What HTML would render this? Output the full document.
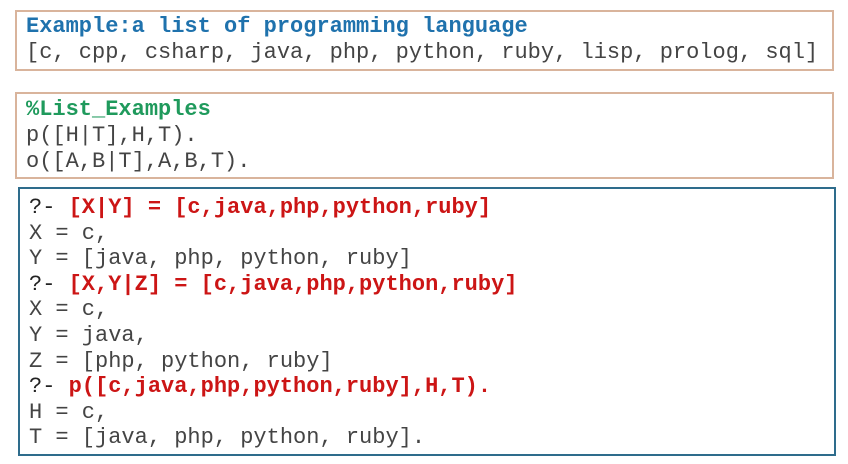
<!DOCTYPE html>
<html><head><style>
body{margin:0;width:848px;height:464px;background:#fff;position:relative;overflow:hidden;font-family:"Liberation Mono",monospace;font-size:22px;color:#444}
.box{position:absolute;box-sizing:border-box;white-space:pre}
.b1{left:15px;top:10px;width:819px;height:61px;border:2px solid #d9b49c;padding:2px 0 0 9px;line-height:26px}
.b2{left:15px;top:92px;width:819px;height:87px;border:2px solid #d9b49c;padding:3px 0 0 9px;line-height:26px}
.b3{left:18px;top:187px;width:818px;height:269px;border:2px solid #2e6c8c;padding:6px 0 0 9px;line-height:25.6px}
.bl{color:#1f72ad;font-weight:bold}
.gr{color:#1f9a5c;font-weight:bold}
.rd{color:#cc1515;font-weight:bold}
.k{color:#222}
</style></head><body>
<div class="box b1"><span class="bl">Example:a list of programming language</span>
[c, cpp, csharp, java, php, python, ruby, lisp, prolog, sql]</div>
<div class="box b2"><span class="gr">%List_Examples</span>
p([H|T],H,T).
o([A,B|T],A,B,T).</div>
<div class="box b3"><span class="k">?- </span><span class="rd">[X|Y] = [c,java,php,python,ruby]</span>
X = c,
Y = [java, php, python, ruby]
<span class="k">?- </span><span class="rd">[X,Y|Z] = [c,java,php,python,ruby]</span>
X = c,
Y = java,
Z = [php, python, ruby]
<span class="k">?- </span><span class="rd">p([c,java,php,python,ruby],H,T).</span>
H = c,
T = [java, php, python, ruby].</div>
</body></html>
